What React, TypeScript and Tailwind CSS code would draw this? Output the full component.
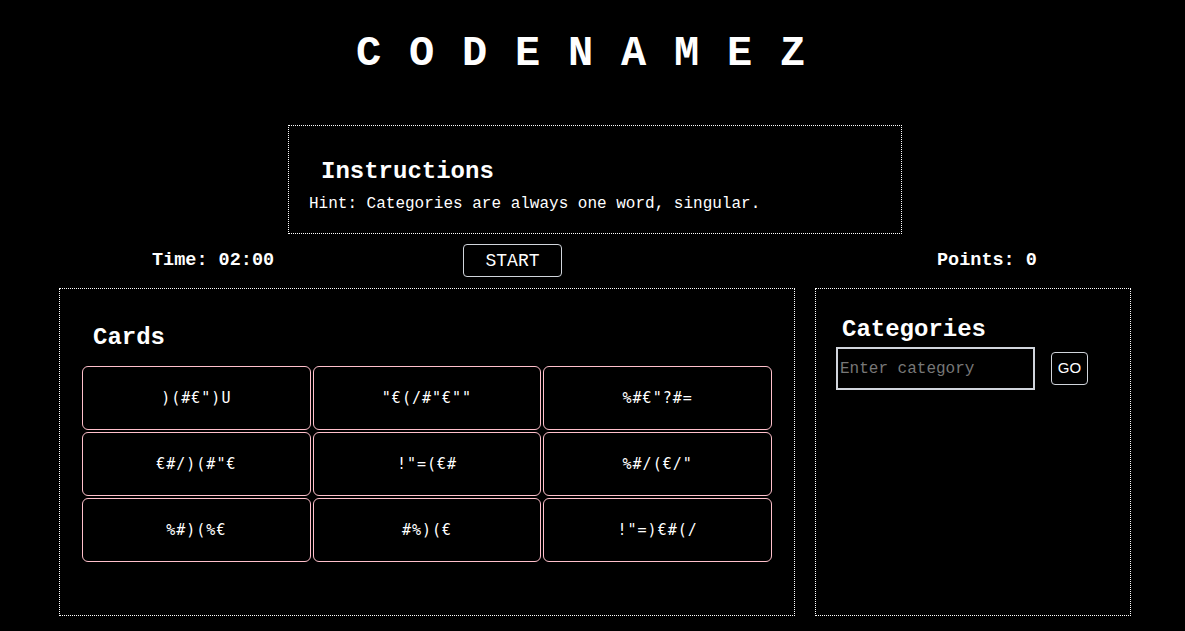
const cards = [
  ')(#€")U',
  '"€(/#"€""',
  '%#€"?#=',
  '€#/)(#"€',
  '!"=(€#',
  '%#/(€/"',
  '%#)(%€',
  '#%)(€',
  '!"=)€#(/',
];

const mono = { fontFamily: '"Liberation Mono", "Courier New", monospace' };

const App = () => {
  return (
    <div className="min-h-[631px] bg-black text-white" style={mono}>
      <h1 className="pt-[33px] pl-[4px] text-center text-[42px] font-bold leading-none tracking-[27.8px]">
        CODENAMEZ
      </h1>

      <div className="ml-[288px] mt-[50px] w-[614px] border border-dotted border-white pt-[34px] pb-[19px]">
        <h2 className="pl-[32px] text-[24px] font-bold leading-none">Instructions</h2>
        <p className="mt-[10px] pl-[20px] text-[16px] leading-[20px]">
          Hint: Categories are always one word, singular.
        </p>
      </div>

      <div className="mt-[10px] flex h-[33px] items-center">
        <div className="w-[463px] pl-[152px] text-[18.5px] font-bold">Time: 02:00</div>
        <button className="h-[33px] w-[99px] rounded border border-gray-300 text-[18px] leading-none">
          START
        </button>
        <div className="pl-[375px] text-[18.5px] font-bold">Points: 0</div>
      </div>

      <div className="mt-[11px] flex gap-[20px] pl-[59px]">
        <div className="h-[328px] w-[736px] border border-dotted border-white px-[22px] pt-[37px]">
          <h2 className="ml-[11px] text-[24px] font-bold leading-none">Cards</h2>
          <div className="mt-[16px] grid grid-cols-3 gap-[2px]">
            {cards.map((c, i) => (
              <div
                key={i}
                className="flex h-[64px] items-center justify-center rounded-md border border-[#ffc0cb] text-[15px] tracking-[1px]"
                style={{ fontFamily: '"DejaVu Sans Mono", monospace' }}
              >
                {c}
              </div>
            ))}
          </div>
        </div>

        <div className="h-[328px] w-[316px] border border-dotted border-white px-[20px] pt-[29px]">
          <h2 className="ml-[6px] text-[24px] font-bold leading-none">Categories</h2>
          <div className="mt-[5px] flex items-center">
            <input
              placeholder="Enter category"
              className="h-[43px] w-[199px] border-2 border-gray-300 bg-black px-[2px] text-[16px] text-white outline-none placeholder:text-[#777]"
              style={mono}
            />
            <button
              className="ml-[16px] h-[33px] w-[37px] rounded border border-gray-300 text-[15px]"
              style={{ fontFamily: '"Liberation Sans", Arial, sans-serif' }}
            >
              GO
            </button>
          </div>
        </div>
      </div>
    </div>
  );
};

export default App;
